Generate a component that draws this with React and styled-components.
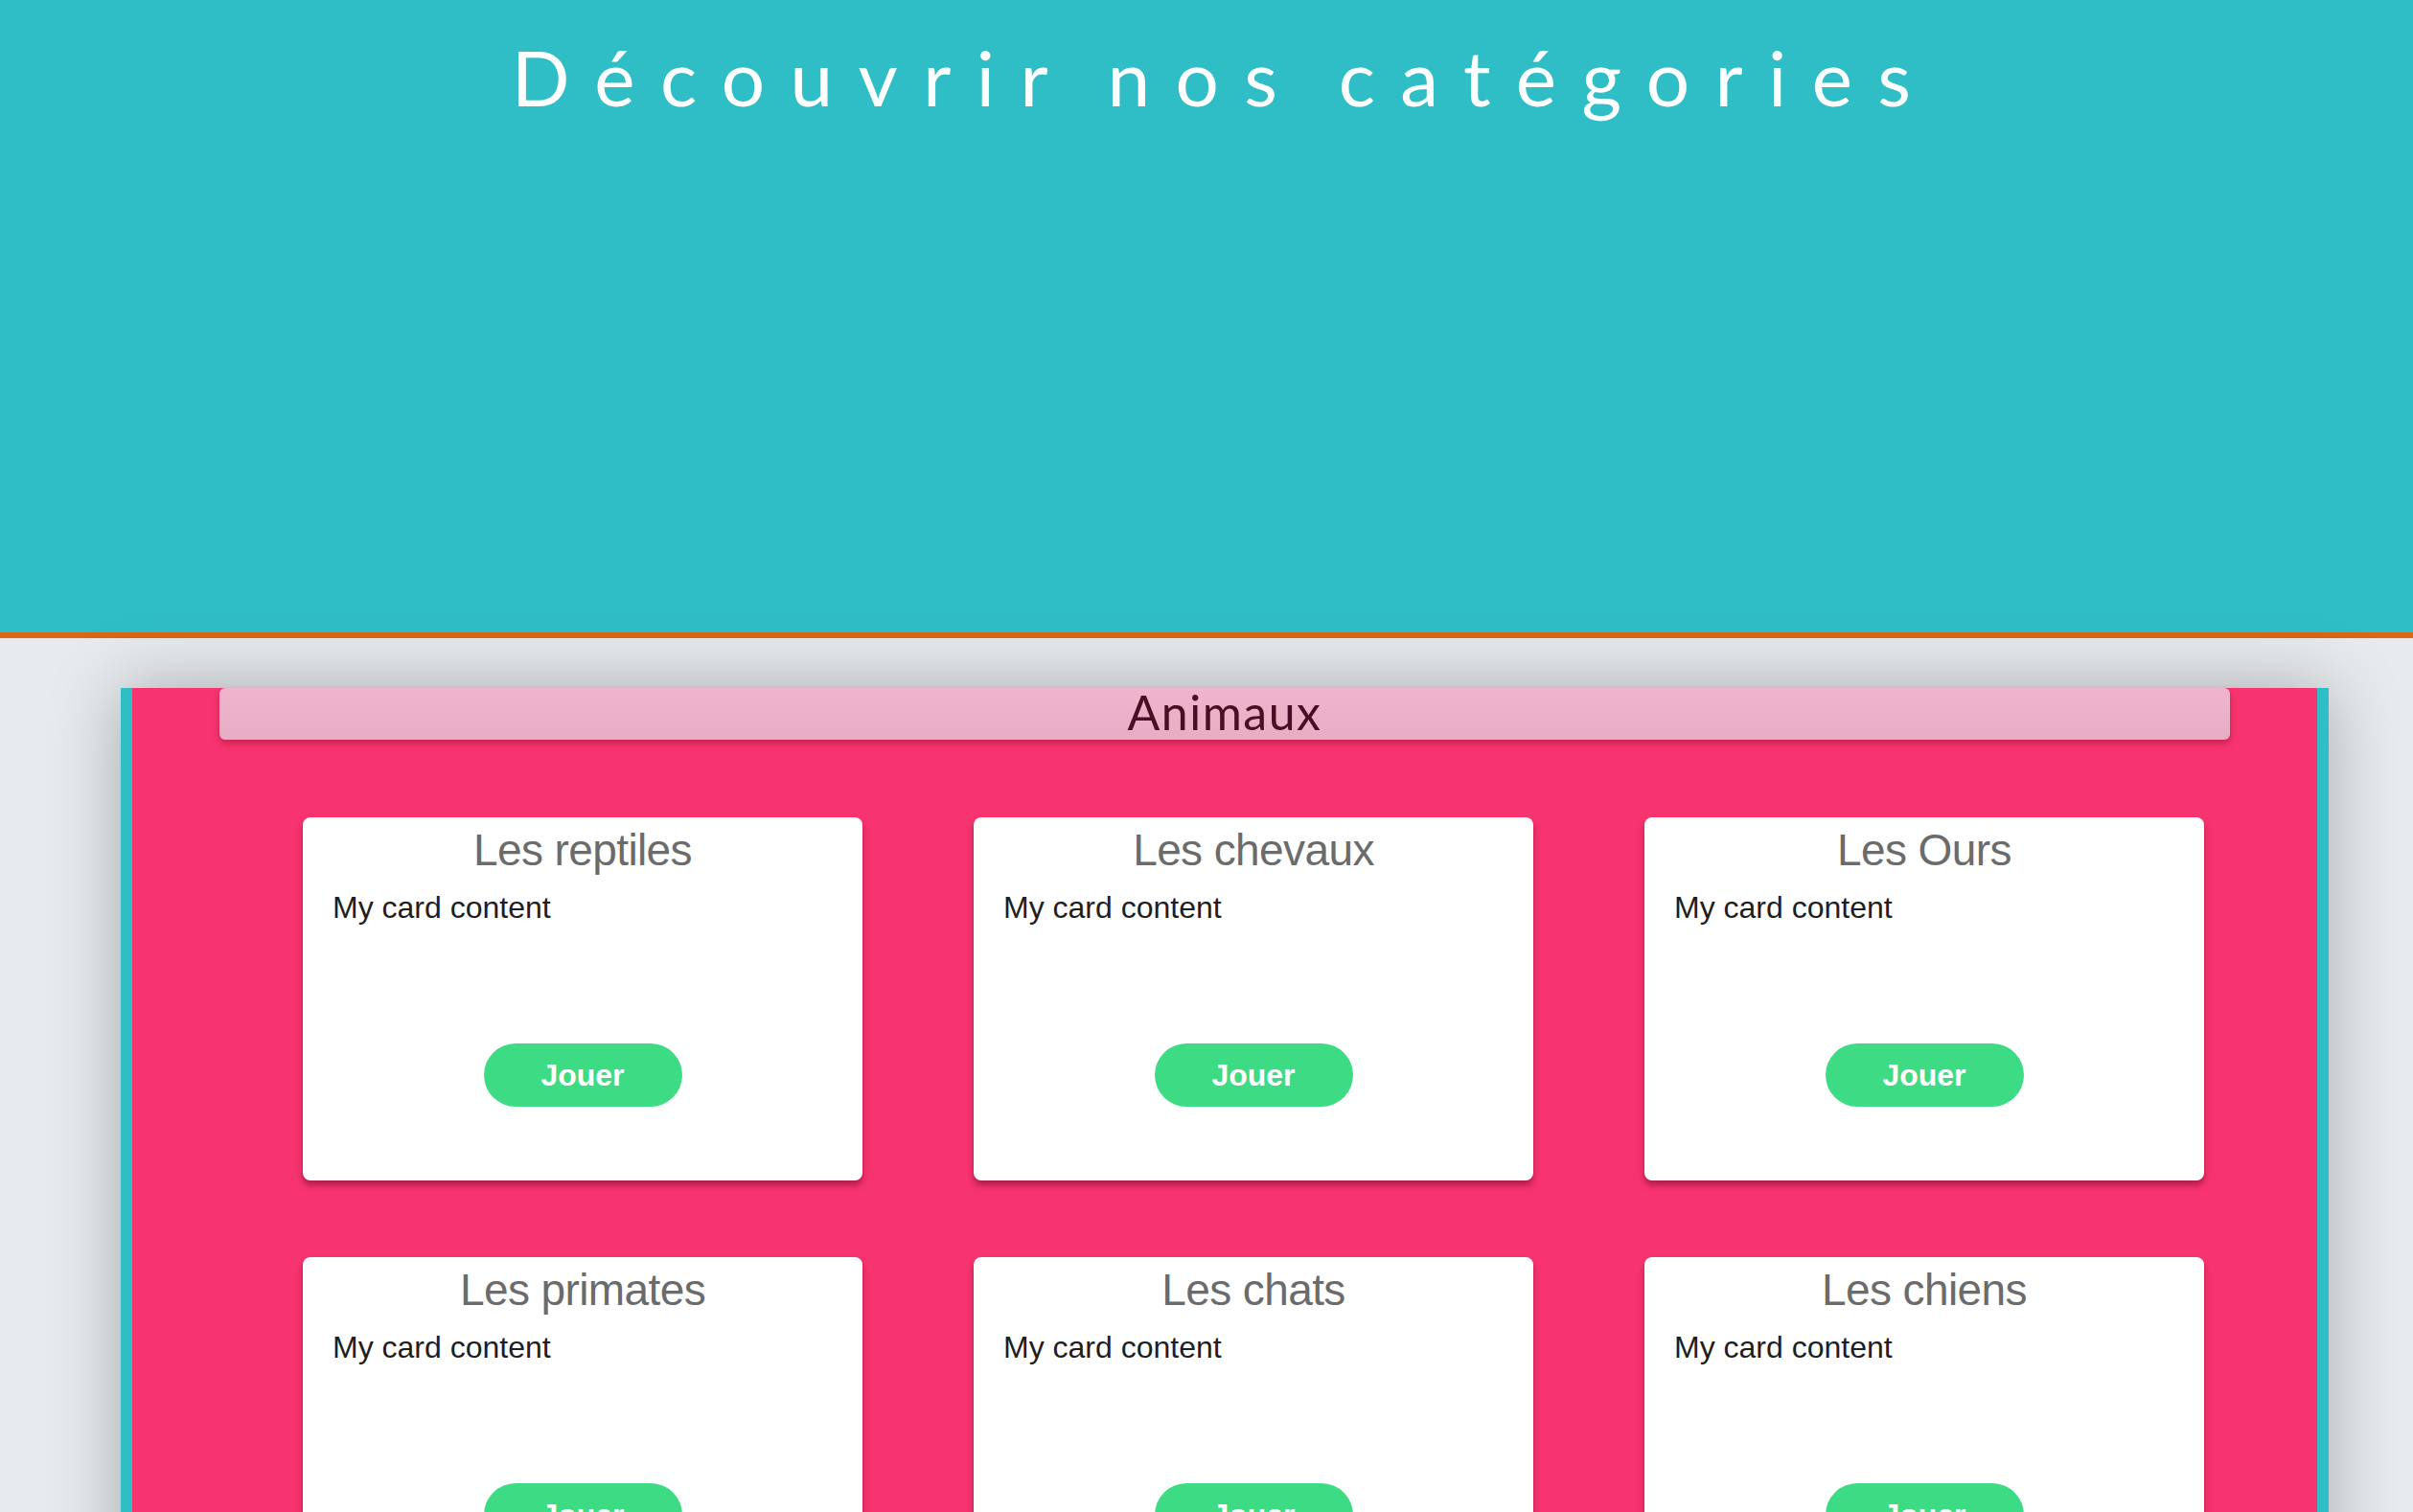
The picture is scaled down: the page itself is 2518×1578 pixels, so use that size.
import React from "react";
import styled, { createGlobalStyle } from "styled-components";

const Global = createGlobalStyle`
  html, body { margin: 0; padding: 0; }
  body {
    background: #e7ebee;
    font-family: "Liberation Sans", Arial, sans-serif;
    overflow-x: hidden;
  }
`;

const Header = styled.header`
  background: #30bec6;
  height: 660px;
  border-bottom: 6px solid #db6614;
  display: flex;
  justify-content: center;
  align-items: flex-start;
`;

const Title = styled.h1`
  margin: 0;
  padding-top: 40px;
  padding-left: 36px;
  font-family: "Lato", "Open Sans", sans-serif;
  font-weight: 400;
  font-size: 80px;
  line-height: 1;
  color: #ffffff;
  letter-spacing: 0.33em;
  word-spacing: -0.12em;
  white-space: nowrap;
`;

const Section = styled.section`
  margin: 52px 0 0 126px;
  width: 2304px;
  background: #f7346f;
  border-left: 12px solid #30bec6;
  border-right: 12px solid #30bec6;
  box-sizing: border-box;
  box-shadow: 0 0 70px rgba(0, 0, 0, 0.28);
  padding-bottom: 80px;
`;

const Banner = styled.div`
  margin: 0 91px;
  height: 54px;
  border-radius: 6px;
  background: linear-gradient(180deg, #efb5cc 0%, #e6adc5 100%);
  box-shadow: 0 4px 6px rgba(160, 20, 60, 0.55);
  display: flex;
  justify-content: center;
  align-items: center;
  font-family: "Lato", "Open Sans", sans-serif;
  font-size: 50px;
  line-height: 50px;
  padding-bottom: 4px;
  box-sizing: border-box;
  color: #4a0d22;
  letter-spacing: 0.03em;
`;

const Grid = styled.div`
  display: grid;
  grid-template-columns: repeat(3, 584px);
  column-gap: 116px;
  row-gap: 80px;
  padding: 81px 118px 0 178px;
`;

const Card = styled.div`
  background: #ffffff;
  border-radius: 8px;
  height: 379px;
  box-sizing: border-box;
  padding: 7px 31px 0;
  box-shadow: 0 5px 6px rgba(120, 10, 45, 0.55);
  display: flex;
  flex-direction: column;
`;

const CardTitle = styled.h2`
  margin: 0;
  text-align: center;
  font-size: 46px;
  font-weight: 400;
  color: #6b6b6b;
  line-height: 54px;
  letter-spacing: -0.6px;
`;

const CardText = styled.p`
  margin: 15px 0 0;
  font-size: 32px;
  color: #1e1e1e;
  line-height: 37px;
`;

const Button = styled.button`
  align-self: center;
  margin-top: 123px;
  width: 207px;
  height: 66px;
  border: none;
  border-radius: 33px;
  background: #3ddb84;
  color: #ffffff;
  font-family: "Liberation Sans", Arial, sans-serif;
  font-weight: 700;
  font-size: 32px;
  cursor: pointer;
`;

const categories = [
  "Les reptiles",
  "Les chevaux",
  "Les Ours",
  "Les primates",
  "Les chats",
  "Les chiens",
];

export default function App() {
  return (
    <>
      <Global />
      <Header>
        <Title>Découvrir nos catégories</Title>
      </Header>
      <Section>
        <Banner>Animaux</Banner>
        <Grid>
          {categories.map((c) => (
            <Card key={c}>
              <CardTitle>{c}</CardTitle>
              <CardText>My card content</CardText>
              <Button>Jouer</Button>
            </Card>
          ))}
        </Grid>
      </Section>
    </>
  );
}
